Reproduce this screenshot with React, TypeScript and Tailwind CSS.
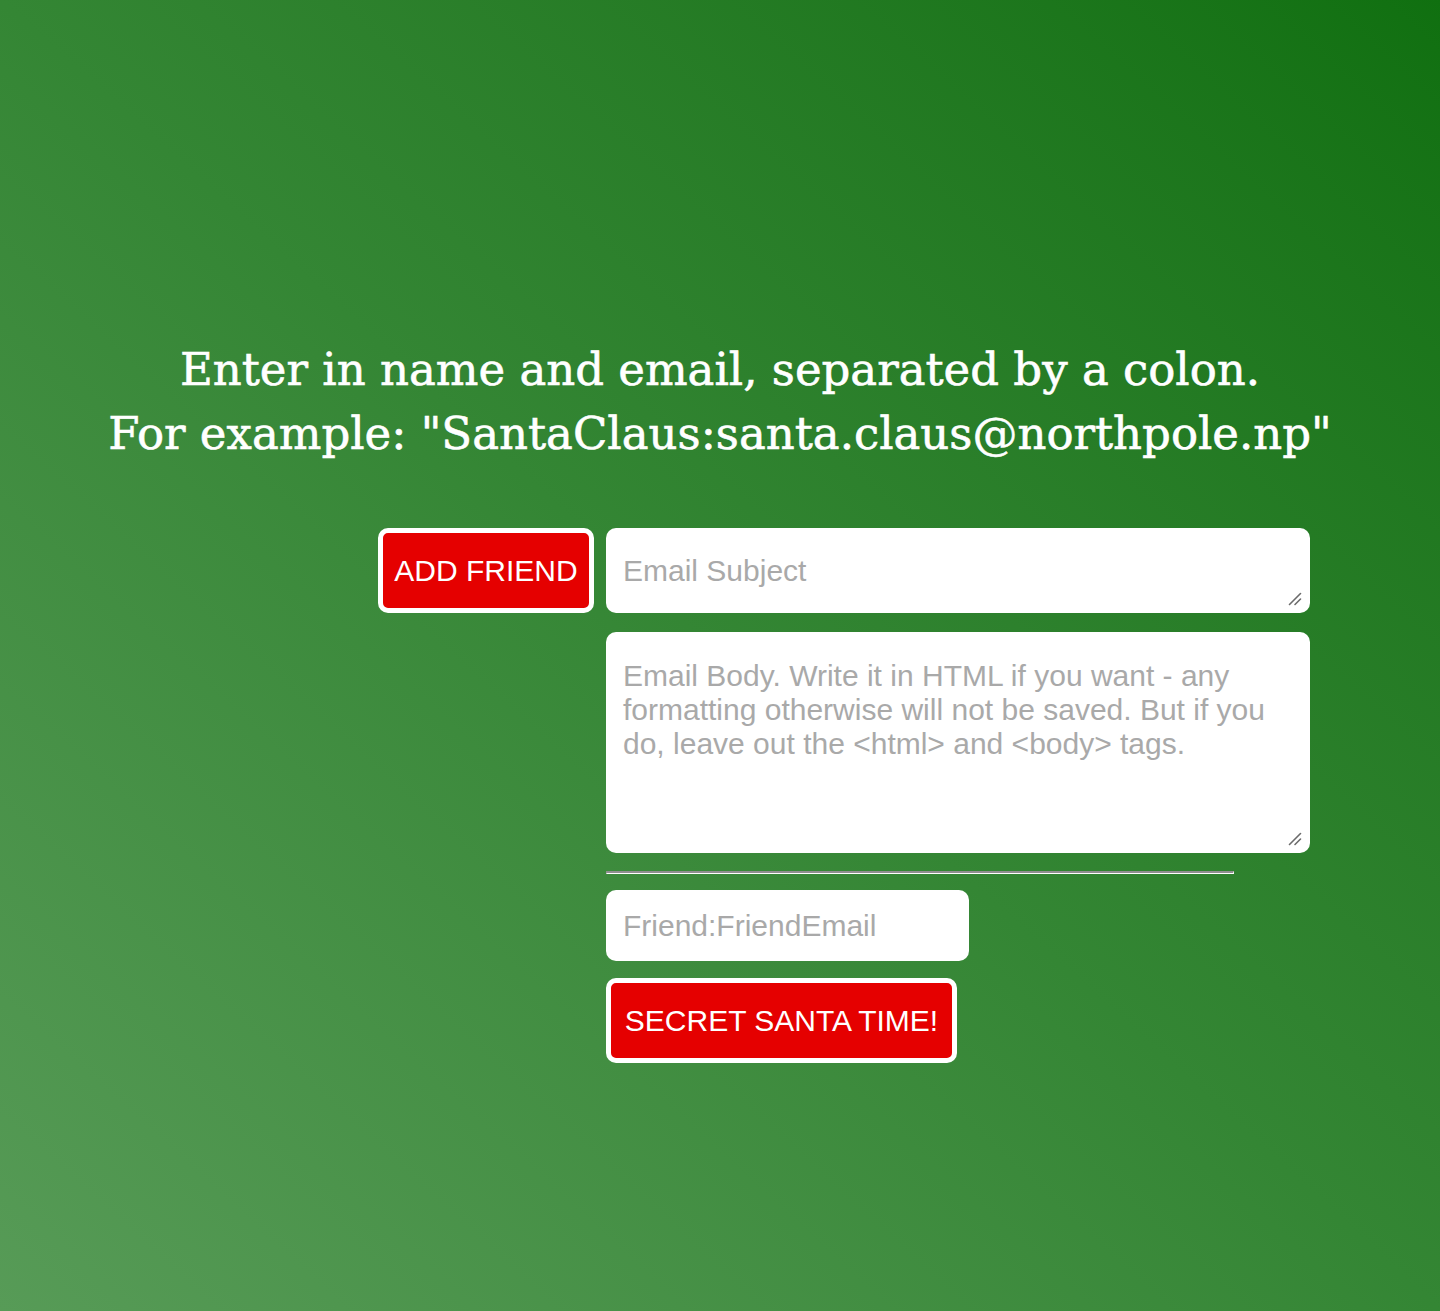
function Grip() {
  return (
    <svg
      className="pointer-events-none absolute right-[8px] bottom-[7px] h-[14px] w-[14px]"
      viewBox="0 0 14 14"
      fill="none"
      stroke="#6b6b6b"
      strokeWidth="1.6"
      strokeLinecap="round"
    >
      <line x1="12.5" y1="1.5" x2="1.5" y2="12.5" />
      <line x1="12.5" y1="7" x2="7" y2="12.5" />
    </svg>
  );
}

export default function App() {
  return (
    <div className="min-h-[1311px] w-full bg-gradient-to-tr from-[#579b57] via-[#348634] to-[#107010] font-['Liberation_Sans',Arial,sans-serif]">
      <div className="pt-[338px] text-center">
        <h1 className="font-['DejaVu_Serif',serif] text-[45px] leading-[64px] text-white [-webkit-text-stroke:0.6px_white]">
          Enter in name and email, separated by a colon.
          <br />
          For example: "SantaClaus:santa.claus@northpole.np"
        </h1>
      </div>

      <div className="mt-[62px] ml-[378px] flex items-start gap-[12px]">
        <button className="h-[85px] w-[216px] rounded-[10px] border-[5px] border-white bg-[#e50000] text-[30px] text-white">
          ADD FRIEND
        </button>

        <div className="flex w-[704px] flex-col">
          <div className="relative">
            <textarea
              placeholder="Email Subject"
              className="block h-[85px] w-full resize-none rounded-[10px] bg-white px-[17px] pt-[26px] text-[30px] leading-[34px] text-gray-800 outline-none placeholder:text-[#a9a9a9]"
            />
            <Grip />
          </div>
          <div className="relative mt-[19px]">
            <textarea
              placeholder="Email Body. Write it in HTML if you want - any formatting otherwise will not be saved. But if you do, leave out the <html> and <body> tags."
              className="block h-[221px] w-full resize-none rounded-[10px] bg-white px-[17px] pt-[27px] text-[30px] leading-[34px] text-gray-800 outline-none placeholder:text-[#a9a9a9]"
            />
            <Grip />
          </div>
          <div className="mt-[18px] h-[3px] w-[628px] border-t-2 border-r border-b border-l border-t-[#8f8f8f] border-l-[#8f8f8f] border-r-white border-b-white" />
          <input
            placeholder="Friend:FriendEmail"
            className="mt-[16px] h-[71px] w-[363px] rounded-[10px] bg-white px-[17px] text-[30px] text-gray-800 outline-none placeholder:text-[#a9a9a9]"
          />
          <button className="mt-[17px] h-[85px] w-[351px] rounded-[10px] border-[5px] border-white bg-[#e50000] text-[30px] text-white">
            SECRET SANTA TIME!
          </button>
        </div>
      </div>
    </div>
  );
}
